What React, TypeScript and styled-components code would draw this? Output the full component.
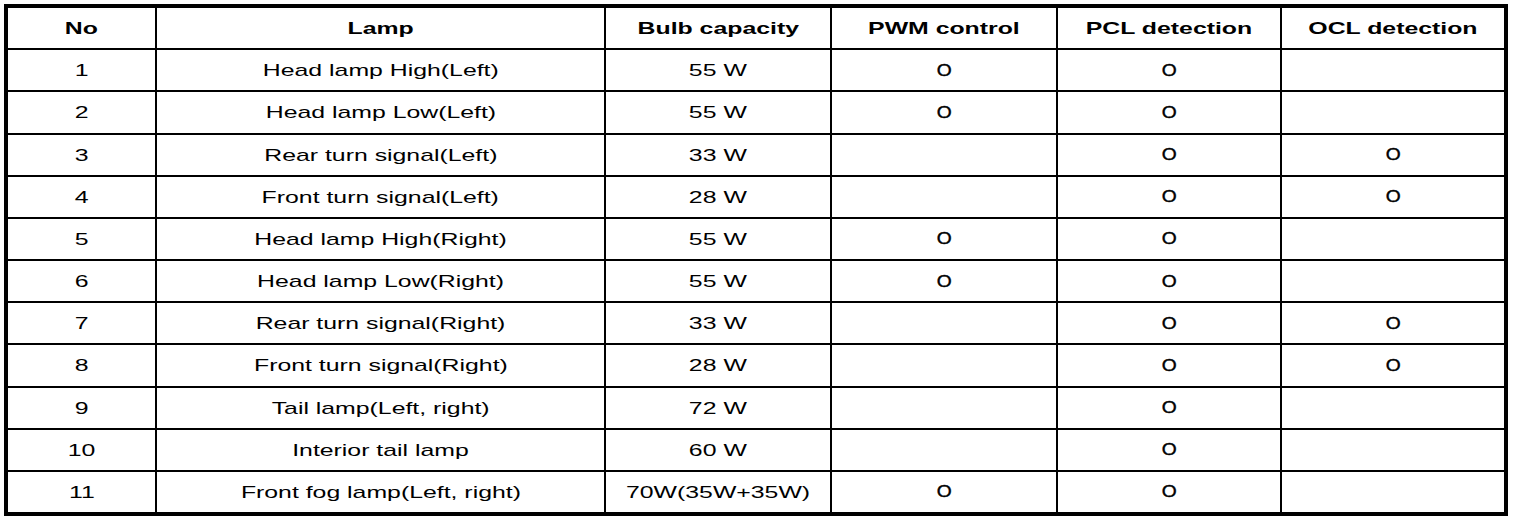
import React from "react";
import styled, { createGlobalStyle } from "styled-components";

const GlobalStyle = createGlobalStyle`
  html, body {
    margin: 0;
    padding: 0;
    background: #ffffff;
  }
  body {
    font-family: "Liberation Sans", Arial, sans-serif;
    color: #000000;
  }
`;

const Page = styled.div`
  padding: 4px;
`;

const Grid = styled.div`
  box-sizing: border-box;
  width: 1504px;
  height: 512px;
  display: grid;
  grid-template-columns: 147px 447px 224px 224px 222px 222px;
  grid-auto-rows: 1fr;
  gap: 2px;
  background: #000000;
  border: 4px solid #000000;
`;

const Row = styled.div`
  display: contents;
`;

const Cell = styled.div<{ $head?: boolean }>`
  background: #ffffff;
  display: flex;
  align-items: center;
  justify-content: center;
  overflow: hidden;
  font-size: 17px;
  font-weight: ${(p) => (p.$head ? 700 : 400)};
  line-height: 1;
  padding-top: 1px;
`;

const Label = styled.span`
  display: inline-block;
  white-space: nowrap;
  transform: scaleX(1.46);
`;

const Mark = styled.span`
  display: inline-block;
  font-size: 16px;
  font-weight: 400;
  -webkit-text-stroke: 0.4px #000;
  line-height: 1;
  transform: scaleX(1.2);
`;

const headers = [
  "No",
  "Lamp",
  "Bulb capacity",
  "PWM control",
  "PCL detection",
  "OCL detection",
];

type Item = {
  lamp: string;
  bulb: string;
  pwm: boolean;
  pcl: boolean;
  ocl: boolean;
};

const rows: Item[] = [
  { lamp: "Head lamp High(Left)", bulb: "55 W", pwm: true, pcl: true, ocl: false },
  { lamp: "Head lamp Low(Left)", bulb: "55 W", pwm: true, pcl: true, ocl: false },
  { lamp: "Rear turn signal(Left)", bulb: "33 W", pwm: false, pcl: true, ocl: true },
  { lamp: "Front turn signal(Left)", bulb: "28 W", pwm: false, pcl: true, ocl: true },
  { lamp: "Head lamp High(Right)", bulb: "55 W", pwm: true, pcl: true, ocl: false },
  { lamp: "Head lamp Low(Right)", bulb: "55 W", pwm: true, pcl: true, ocl: false },
  { lamp: "Rear turn signal(Right)", bulb: "33 W", pwm: false, pcl: true, ocl: true },
  { lamp: "Front turn signal(Right)", bulb: "28 W", pwm: false, pcl: true, ocl: true },
  { lamp: "Tail lamp(Left, right)", bulb: "72 W", pwm: false, pcl: true, ocl: false },
  { lamp: "Interior tail lamp", bulb: "60 W", pwm: false, pcl: true, ocl: false },
  { lamp: "Front fog lamp(Left, right)", bulb: "70W(35W+35W)", pwm: true, pcl: true, ocl: false },
];

const MarkCell = ({ on }: { on: boolean }) => (
  <Cell>{on ? <Mark>O</Mark> : null}</Cell>
);

export default function App() {
  return (
    <>
      <GlobalStyle />
      <Page>
        <Grid>
          <Row>
            {headers.map((h) => (
              <Cell $head key={h}>
                <Label>{h}</Label>
              </Cell>
            ))}
          </Row>
          {rows.map((r, i) => (
            <Row key={i}>
              <Cell>
                <Label>{i + 1}</Label>
              </Cell>
              <Cell>
                <Label>{r.lamp}</Label>
              </Cell>
              <Cell>
                <Label>{r.bulb}</Label>
              </Cell>
              <MarkCell on={r.pwm} />
              <MarkCell on={r.pcl} />
              <MarkCell on={r.ocl} />
            </Row>
          ))}
        </Grid>
      </Page>
    </>
  );
}
